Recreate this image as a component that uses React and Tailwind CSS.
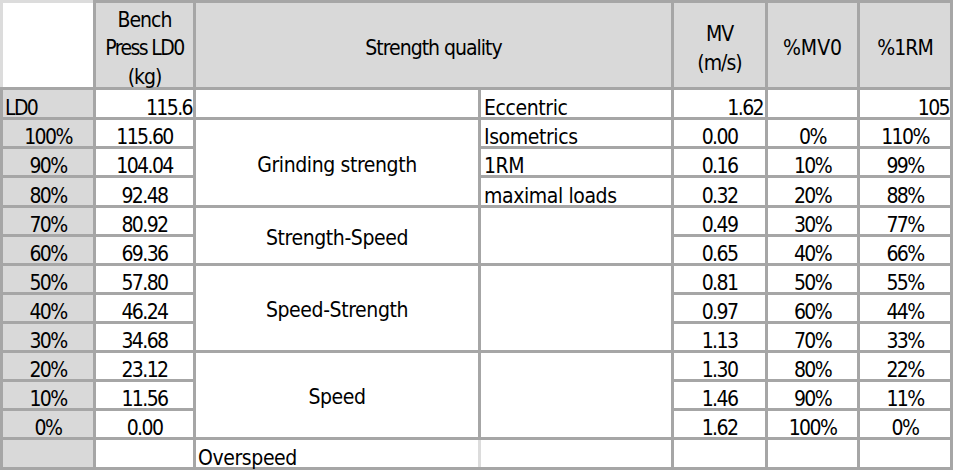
const pct = ["100%", "90%", "80%", "70%", "60%", "50%", "40%", "30%", "20%", "10%", "0%"];
const kg = ["115.60", "104.04", "92.48", "80.92", "69.36", "57.80", "46.24", "34.68", "23.12", "11.56", "0.00"];
const mv = ["0.00", "0.16", "0.32", "0.49", "0.65", "0.81", "0.97", "1.13", "1.30", "1.46", "1.62"];
const mv0 = ["0%", "10%", "20%", "30%", "40%", "50%", "60%", "70%", "80%", "90%", "100%"];
const rm = ["110%", "99%", "88%", "77%", "66%", "55%", "44%", "33%", "22%", "11%", "0%"];

// quality column (merged cells) and the left-aligned note column, keyed by row index
const quality = { 0: ["Grinding strength", "row-span-3"], 3: ["Strength-Speed", "row-span-2"], 5: ["Speed-Strength", "row-span-3"], 8: ["Speed", "row-span-3"] };
const notes = { 0: "Isometrics", 1: "1RM", 2: "maximal loads", 3: ["", "row-span-2"], 5: ["", "row-span-3"], 8: ["", "row-span-3"] };

function Num({ children, className = "" }) {
  return (
    <div className={`flex items-end justify-center bg-white tracking-[-1.6px] ${className}`}>
      {children}
    </div>
  );
}

function Head({ children, className = "" }) {
  return (
    <div className={`flex flex-col items-center justify-center bg-[#d9d9d9] pt-[7px] leading-[28.5px] tracking-[-1px] ${className}`}>
      {children}
    </div>
  );
}

export default function App() {
  return (
    <div className="w-[953px] h-[470px] overflow-hidden font-['DejaVu_Sans_Condensed','DejaVu_Sans',sans-serif] text-[21px] leading-[17px] text-black">
      <div className="grid w-[953px] h-[470px] gap-[3px] p-[3px] bg-[#a6a6a6] grid-cols-[90px_97px_282px_190px_91px_89px_90px] grid-rows-[84px_27px_26px_26px_27px_26px_26px_26px_26px_26px_26px_26px_26px_27px]">
        {/* header */}
        <div className="-mt-[3px] -ml-[3px] border-t-[3px] border-l-[3px] border-[#dcdcdc] bg-white" />
        <Head>
          <span>Bench</span>
          <span className="tracking-[-1.6px]">Press LD0</span>
          <span>(kg)</span>
        </Head>
        <Head className="col-span-2 pt-[6px] tracking-[-0.45px]">Strength quality</Head>
        <Head>
          <span>MV</span>
          <span>(m/s)</span>
        </Head>
        <Head className="pt-[6px] tracking-[0px]">%MV0</Head>
        <Head className="pt-[6px] tracking-[-0.4px]">%1RM</Head>

        {/* LD0 row */}
        <div className="flex items-end bg-[#d9d9d9] pl-[2px] tracking-[-1.6px]">LD0</div>
        <Num className="justify-end pr-[1px]">115.6</Num>
        <div className="bg-white" />
        <div className="flex items-end bg-white pl-[3px] tracking-[-0.4px]">Eccentric</div>
        <Num className="justify-end pr-[2px]">1.62</Num>
        <div className="bg-white" />
        <Num className="justify-end pr-[1px]">105</Num>

        {pct.map((p, i) => {
          const q = quality[i];
          const n = notes[i];
          return [
            <div key={`p${i}`} className="flex items-end justify-center bg-[#d9d9d9] tracking-[-1.6px]">{p}</div>,
            <Num key={`k${i}`}>{kg[i]}</Num>,
            q && (
              <div key={`q${i}`} className={`flex items-center justify-center bg-white pt-[5px] tracking-[-0.4px] ${q[1]}`}>
                {q[0]}
              </div>
            ),
            n !== undefined && (
              <div
                key={`n${i}`}
                className={`flex items-end bg-white pl-[3px] tracking-[-0.4px] ${Array.isArray(n) ? n[1] : ""}`}
              >
                {Array.isArray(n) ? n[0] : n}
              </div>
            ),
            <Num key={`m${i}`}>{mv[i]}</Num>,
            <Num key={`v${i}`}>{mv0[i]}</Num>,
            <Num key={`r${i}`}>{rm[i]}</Num>,
          ];
        })}

        {/* last row */}
        <div className="bg-[#d9d9d9]" />
        <div className="bg-white" />
        <div className="col-span-2 flex bg-white">
          <div className="flex w-[282px] shrink-0 items-end pl-[2px] tracking-[-0.4px]">Overspeed</div>
          <div className="w-[3px] shrink-0 bg-[#dcdcdc]" />
          <div className="flex-1" />
        </div>
        <div className="bg-white" />
        <div className="bg-white" />
        <div className="bg-white" />
      </div>
    </div>
  );
}
